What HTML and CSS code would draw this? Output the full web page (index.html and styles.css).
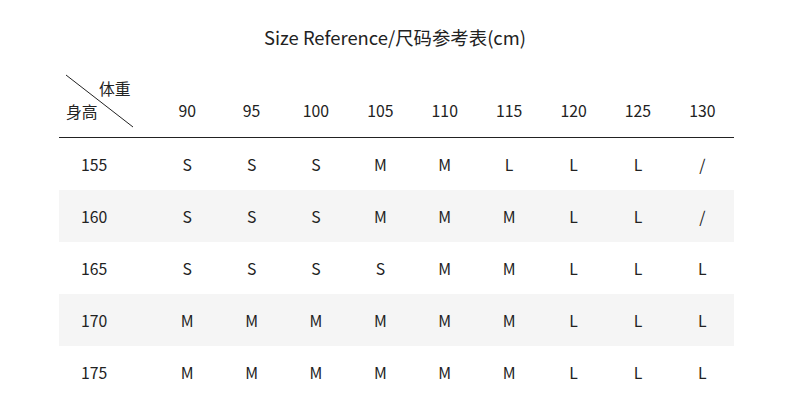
FILE: index.html
```html
<!DOCTYPE html>
<html>
<head>
<meta charset="utf-8">
<link rel="stylesheet" href="styles.css">
</head>
<body>
<div class="page">
  <h1 class="title">Size Reference/尺码参考表(cm)</h1>
  <div class="table">
    <div class="row head">
      <div class="corner">
        <svg class="diag" width="80" height="60" viewBox="0 0 80 60"><line x1="6" y1="2" x2="73" y2="54" stroke="#222" stroke-width="1"/></svg>
        <span class="w">体重</span>
        <span class="h">身高</span>
      </div>
      <div>90</div><div>95</div><div>100</div><div>105</div><div>110</div><div>115</div><div>120</div><div>125</div><div>130</div>
    </div>
    <div class="row"><div class="first">155</div><div>S</div><div>S</div><div>S</div><div>M</div><div>M</div><div>L</div><div>L</div><div>L</div><div>/</div></div>
    <div class="row alt"><div class="first">160</div><div>S</div><div>S</div><div>S</div><div>M</div><div>M</div><div>M</div><div>L</div><div>L</div><div>/</div></div>
    <div class="row"><div class="first">165</div><div>S</div><div>S</div><div>S</div><div>S</div><div>M</div><div>M</div><div>L</div><div>L</div><div>L</div></div>
    <div class="row alt"><div class="first">170</div><div>M</div><div>M</div><div>M</div><div>M</div><div>M</div><div>M</div><div>L</div><div>L</div><div>L</div></div>
    <div class="row"><div class="first">175</div><div>M</div><div>M</div><div>M</div><div>M</div><div>M</div><div>M</div><div>L</div><div>L</div><div>L</div></div>
  </div>
</div>
</body>
</html>
```
FILE: styles.css
```css
html, body { margin: 0; padding: 0; background: #fff; }
body { font-family: "Noto Sans CJK SC", "Noto Sans", sans-serif; color: #222; }
.page { width: 790px; height: 410px; padding-top: 25px; box-sizing: border-box; }
.title { margin: 0; font-size: 18.4px; font-weight: 400; text-align: center; line-height: 24px; color: #222; }
.table { margin-left: 59px; width: 675px; margin-top: 21px; }
.row { display: grid; grid-template-columns: 96px repeat(9, 64.4px); height: 52px; align-items: center; font-size: 15.8px; }
.row > div { text-align: center; }
.row .first { text-align: left; padding-left: 22px; }
.row.alt { background: #f5f5f5; }
.row.head { height: 68px; border-bottom: 1px solid #222; align-items: end; padding-bottom: 15px; box-sizing: border-box; }
.corner { position: relative; height: 64px; align-self: end; margin-bottom: -15px; }
.diag { position: absolute; left: 1px; top: 0; }
.corner .w { position: absolute; left: 40px; top: 6px; font-size: 15.8px; line-height: 20px; }
.corner .h { position: absolute; left: 7px; top: 29px; font-size: 15.8px; line-height: 20px; }
```
